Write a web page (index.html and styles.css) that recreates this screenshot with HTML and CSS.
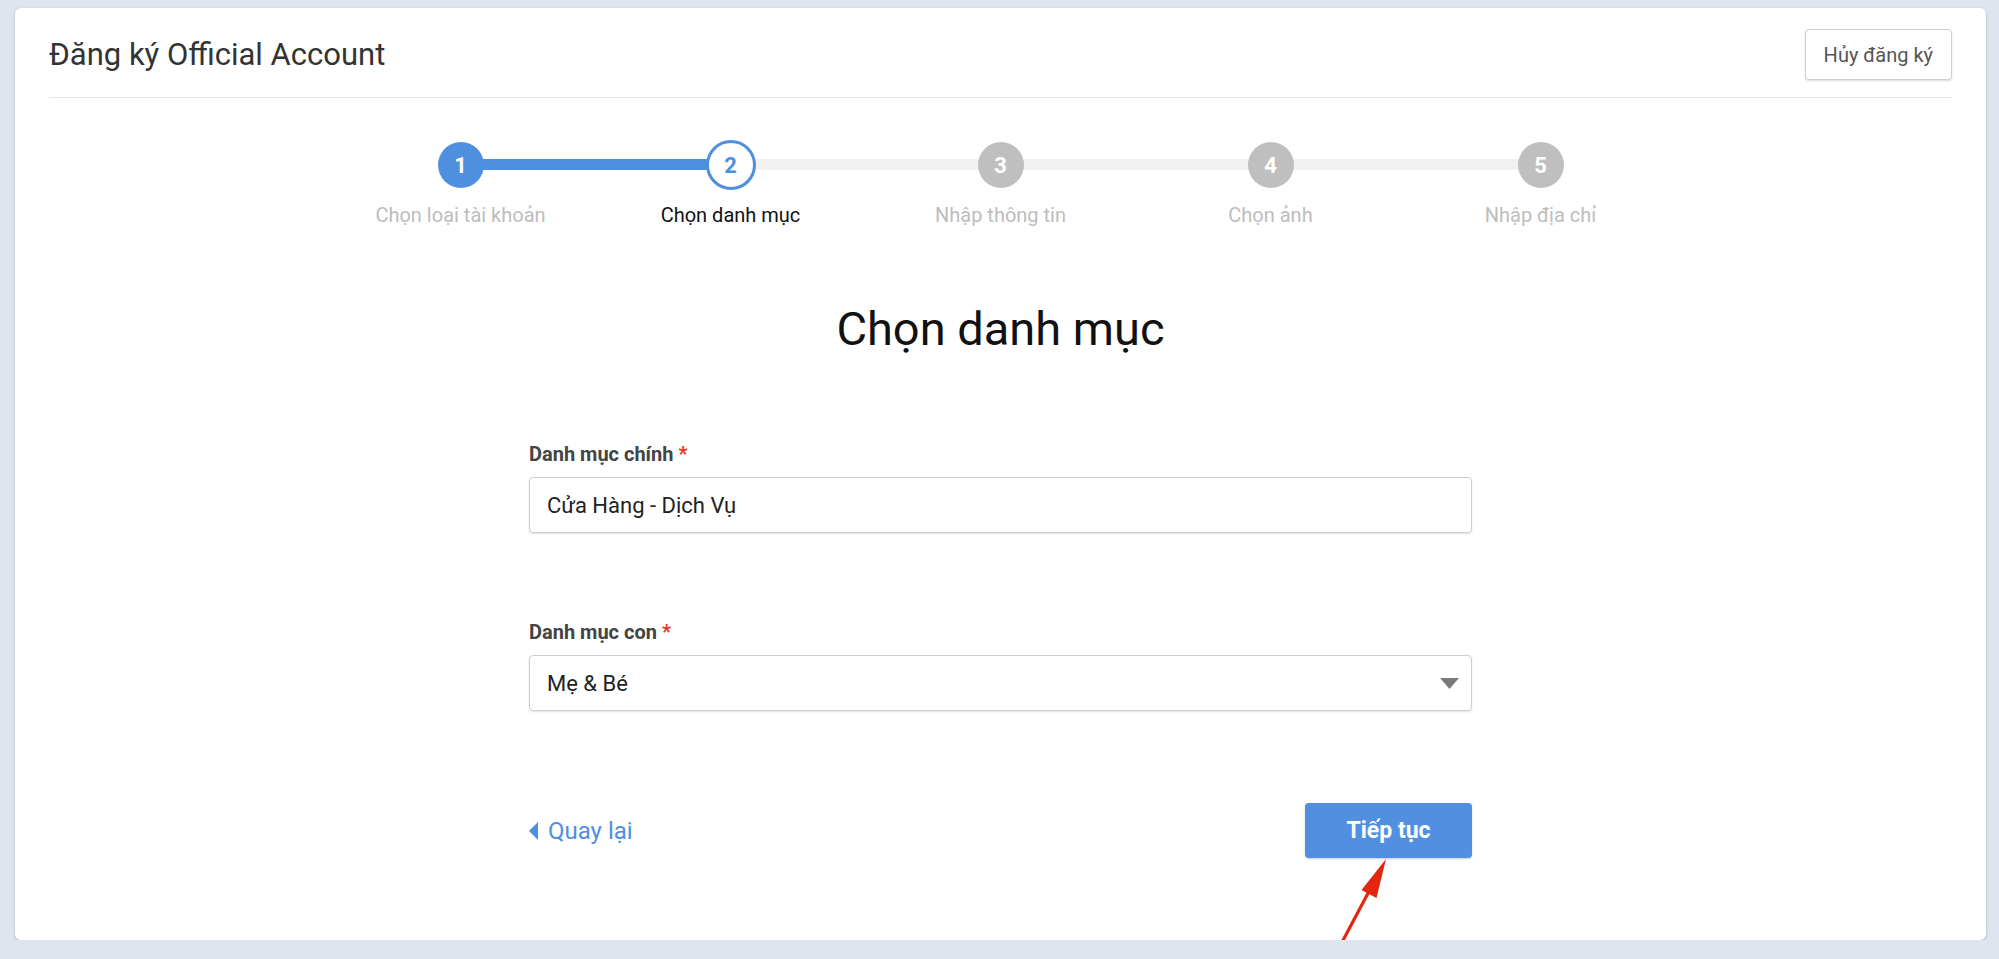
FILE: index.html
```html
<!DOCTYPE html>
<html lang="vi">
<head>
    <meta charset="UTF-8">
    <meta name="viewport" content="width=device-width, initial-scale=1.0">
    <title>Đăng ký Official Account</title>
    <link rel="stylesheet" href="styles.css">
</head>
<body>
    <div class="card">
        <div class="card-header">
            <h1>Đăng ký Official Account</h1>
            <button class="btn-cancel">Hủy đăng ký</button>
        </div>

        <div class="stepper">
            <div class="step done">
                <div class="step-circle">1</div>
                <div class="step-label">Chọn loại tài khoản</div>
            </div>
            <div class="step active">
                <div class="step-circle">2</div>
                <div class="step-label">Chọn danh mục</div>
            </div>
            <div class="step">
                <div class="step-circle">3</div>
                <div class="step-label">Nhập thông tin</div>
            </div>
            <div class="step">
                <div class="step-circle">4</div>
                <div class="step-label">Chọn ảnh</div>
            </div>
            <div class="step">
                <div class="step-circle">5</div>
                <div class="step-label">Nhập địa chỉ</div>
            </div>
        </div>

        <h2 class="page-title">Chọn danh mục</h2>

        <div class="form">
            <div class="field">
                <label class="field-label">Danh mục chính <span class="required">*</span></label>
                <div class="field-box">Cửa Hàng - Dịch Vụ</div>
            </div>

            <div class="field field-sub">
                <label class="field-label">Danh mục con <span class="required">*</span></label>
                <div class="field-box select-box">
                    <span>Mẹ &amp; Bé</span>
                    <svg class="select-arrow" width="19" height="11" viewBox="0 0 19 11"><polygon points="0,0 19,0 9.5,11" fill="#7a7a7a"/></svg>
                </div>
            </div>

            <div class="form-actions">
                <a class="btn-back" href="#">
                    <svg width="9" height="18" viewBox="0 0 9 18"><polygon points="9,0 9,18 0,9" fill="#4f8fe0"/></svg>
                    Quay lại
                </a>
                <div class="next-wrap">
                    <button class="btn-next">Tiếp tục</button>
                    <!-- annotation arrow pointing at the button -->
                    <svg class="hint-arrow" width="70" height="95" viewBox="0 0 70 95">
                        <line x1="10" y1="88" x2="44" y2="24" stroke="#e2260f" stroke-width="3.2" stroke-linecap="round"/>
                        <polygon points="56,1 46.5,40 31.5,32" fill="#e2260f"/>
                    </svg>
                </div>
            </div>
        </div>
    </div>
</body>
</html>
```

FILE: styles.css
```css
body {
    margin: 0;
    background-color: #dfe5ee;
    font-family: Roboto, 'Liberation Sans', sans-serif;
    color: #333;
}

.card {
    background: white;
    margin: 8px 13px 0 15px;
    padding: 0 34px 82px;
    border-radius: 6px;
    box-shadow: 0 1px 3px rgba(0,0,0,0.22);
}

.card-header {
    display: flex;
    align-items: center;
    justify-content: space-between;
    padding: 21px 0 17px;
    border-bottom: 1px solid #e2e7ee;
}

.card-header h1 {
    margin: 0;
    font-size: 31px;
    font-weight: 400;
    color: #333;
}

.btn-cancel {
    height: 51px;
    padding: 0 18px;
    background: white;
    border: 1px solid #cfcfcf;
    border-radius: 4px;
    box-shadow: 0 1px 2px rgba(0,0,0,0.15);
    font-family: inherit;
    font-size: 20px;
    color: #555;
    cursor: pointer;
}

/* stepper */
.stepper {
    display: flex;
    justify-content: center;
    margin-top: 44px;
}

.step {
    position: relative;
    width: 270px;
    display: flex;
    flex-direction: column;
    align-items: center;
}

.step:not(:last-child)::after {
    content: '';
    position: absolute;
    top: 17px;
    left: 50%;
    width: 100%;
    height: 11px;
    background: #f1f1f1;
}

.step.done::after {
    background: #4f8fe0 !important;
}

.step-circle {
    position: relative;
    z-index: 1;
    width: 46px;
    height: 46px;
    border-radius: 50%;
    background: #bfbfbf;
    color: white;
    font-size: 22px;
    font-weight: bold;
    display: flex;
    align-items: center;
    justify-content: center;
    box-sizing: border-box;
}

.step.done .step-circle {
    background: #4f8fe0;
}

.step.active .step-circle {
    width: 50px;
    height: 50px;
    margin: -2px 0;
    background: white;
    border: 3px solid #4f8fe0;
    color: #4f8fe0;
}

.step-label {
    margin-top: 15px;
    font-size: 20px;
    line-height: 24px;
    color: #bdbdbd;
    white-space: nowrap;
}

.step.active .step-label {
    color: #111;
}

.page-title {
    margin: 74px 0 0;
    text-align: center;
    font-size: 47px;
    font-weight: 400;
    color: #111;
}

/* form */
.form {
    width: 943px;
    margin: 86px auto 0;
}

.field-label {
    display: block;
    font-size: 20px;
    line-height: 24px;
    font-weight: bold;
    color: #444;
}

.required {
    color: #e3361c;
}

.field-box {
    margin-top: 11px;
    height: 56px;
    box-sizing: border-box;
    padding: 0 17px;
    border: 1px solid #cdcdcd;
    border-radius: 4px;
    box-shadow: 0 1px 2px rgba(0,0,0,0.12);
    display: flex;
    align-items: center;
    font-size: 22px;
    color: #222;
}

.field-sub {
    margin-top: 87px;
}

.select-box {
    justify-content: space-between;
    padding-right: 12px;
}

.form-actions {
    margin-top: 92px;
    display: flex;
    align-items: center;
    justify-content: space-between;
}

.btn-back {
    display: flex;
    align-items: center;
    gap: 10px;
    font-size: 24px;
    color: #4f8fe0;
    text-decoration: none;
}

.next-wrap {
    position: relative;
}

.btn-next {
    width: 167px;
    height: 55px;
    background: #5190e1;
    border: none;
    border-radius: 4px;
    box-shadow: 0 1px 2px rgba(0,0,0,0.2);
    color: white;
    font-family: inherit;
    font-size: 23px;
    font-weight: bold;
    cursor: pointer;
}

.hint-arrow {
    position: absolute;
    left: 25px;
    top: 55px;
}
```
